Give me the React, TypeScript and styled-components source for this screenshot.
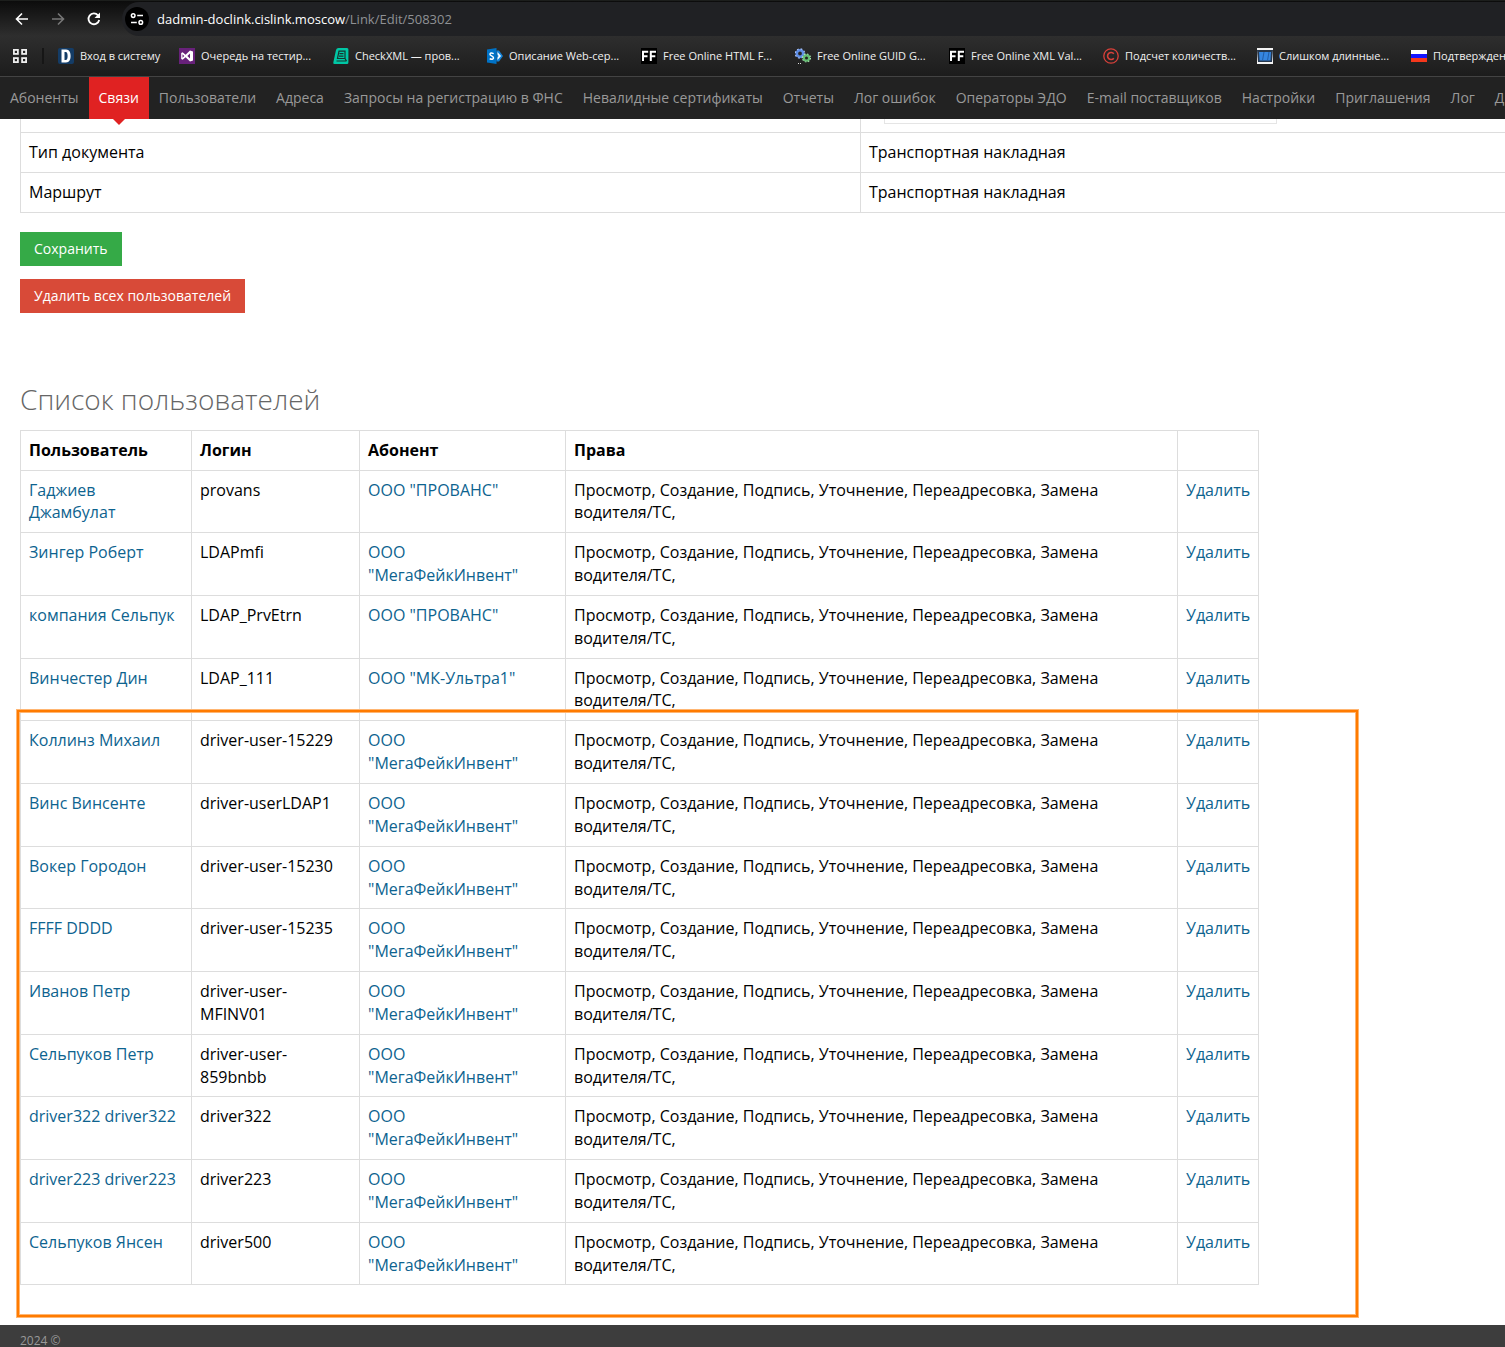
import React from "react";
import styled, { createGlobalStyle } from "styled-components";

const GlobalStyle = createGlobalStyle`
  *, *::before, *::after { box-sizing: border-box; }
  body {
    margin: 0;
    background: #fff;
    color: #000;
    font-family: "Open Sans", "Noto Sans", sans-serif;
    font-size: 16px;
    line-height: 1.4286;
    overflow-x: hidden;
  }
`;

const Page = styled.div`
  overflow: hidden;
`;

const AddressRow = styled.div`
  display: flex;
  align-items: center;
  gap: 20px;
  height: 36px;
  padding: 0 0 0 14px;
  background: linear-gradient(#0c0c0c, #2e2e2e);
  border-top: 1px solid #1c1e1c;
`;

const IconButton = styled.button`
  display: flex;
  flex: none;
  padding: 0;
  border: 0;
  background: none;
`;

const AddressBar = styled.div`
  display: flex;
  flex: 1;
  align-items: center;
  gap: 8px;
  height: 34px;
  padding-left: 3px;
  border-radius: 17px 0 0 17px;
  background: #202124;
  color: #8f9194;
  font-size: 13px;
  line-height: 18px;
`;

const SiteInfo = styled.button`
  display: flex;
  align-items: center;
  justify-content: center;
  width: 24px;
  height: 24px;
  padding: 0;
  border: 0;
  border-radius: 50%;
  background: #000;
`;

const Host = styled.span`
  color: #fff;
`;

const BookmarkBar = styled.nav`
  display: flex;
  align-items: center;
  gap: 20px;
  height: 41px;
  padding: 0 0 1px 12px;
  background: linear-gradient(#2e2e2e, #1c1c1c);
  border-bottom: 1px solid #434343;
`;

const Separator = styled.span`
  flex: none;
  width: 2px;
  height: 16px;
  margin: 0 -6px;
  background: #161616;
`;

const Bookmark = styled.a<{ $short?: boolean }>`
  display: flex;
  flex: none;
  align-items: center;
  gap: 6px;
  width: ${(p) => (p.$short ? 101 : 134)}px;
  color: #f0f0f0;
  font-size: 11px;
  line-height: 18px;
  text-decoration: none;
  white-space: nowrap;

  svg { flex: none; }
`;

const SiteNav = styled.nav`
  display: flex;
  height: 42px;
  background: #222;
`;

const NavLink = styled.a<{ $active?: boolean }>`
  position: relative;
  flex: none;
  padding: 0 10px;
  background: ${(p) => (p.$active ? "#e02222" : "transparent")};
  color: ${(p) => (p.$active ? "#fff" : "#999")};
  font-size: 14px;
  font-weight: ${(p) => (p.$active ? 500 : 400)};
  line-height: 42px;
  text-decoration: none;
  white-space: nowrap;

  &::after {
    content: "";
    display: ${(p) => (p.$active ? "block" : "none")};
    position: absolute;
    top: 100%;
    left: 50%;
    margin-left: -6px;
    border: 6px solid transparent;
    border-bottom: 0;
    border-top-color: #e02222;
  }
`;

const Content = styled.main`
  padding: 0 0 40px 20px;
`;

const Table = styled.table`
  border-collapse: collapse;
  table-layout: fixed;

  th, td {
    padding: 8px;
    border: 1px solid #ddd;
    text-align: left;
    vertical-align: top;
  }
`;

const DetailsTable = styled(Table)`
  width: 113.2%;
`;

const FieldRow = styled.tr`
  && td {
    padding: 0 15px 8px;
    border-top: 0;
  }
`;

const Field = styled.input`
  display: block;
  width: 393px;
  height: 5px;
  margin-left: 8px;
  padding: 0;
  border: 1px solid #e5e5e5;
  border-top: 0;
`;

const Actions = styled.div`
  display: flex;
  flex-direction: column;
  align-items: flex-start;
  gap: 13px;
  padding: 19px 0 66px;
`;

const Button = styled.button<{ $tone: string }>`
  padding: 7px 14px;
  border: 0;
  background: ${(p) => p.$tone};
  color: #fff;
  font-family: inherit;
  font-size: 14px;
  line-height: 20px;
`;

const Heading = styled.h3`
  margin: 0 0 11px;
  color: #666;
  font-size: 28px;
  font-weight: 300;
  line-height: 40px;
`;

const UserList = styled.section`
  position: relative;
`;

const UserTable = styled(Table)`
  width: 100%;
  max-width: 1239px;
`;

const Col = styled.col<{ $width?: number }>`
  width: ${(p) => (p.$width ? p.$width + "px" : "auto")};
`;

const TableLink = styled.a`
  color: #0d638f;
  text-decoration: none;
`;

const Highlight = styled.div`
  position: absolute;
  top: 280px;
  left: -3px;
  width: 1341px;
  height: 607px;
  border: 2px solid #ff7b00;
  box-shadow: 0 0 0 1px #ffb673, inset 0 0 0 1px #ffb673;
  pointer-events: none;
`;

const Footer = styled.footer`
  padding: 8px 20px;
  background: #3d3d3d;
  color: #999;
  font-size: 12px;
  line-height: 15px;
`;

const Svg16 = ({ children }: { children: React.ReactNode }) => (
  <svg width="16" height="16" viewBox="0 0 16 16" aria-hidden="true">
    {children}
  </svg>
);

const ArrowIcon = ({ color, flip }: { color: string; flip?: boolean }) => (
  <Svg16>
    <path
      d={flip ? "M2 8H13.5M8 2.5L13.5 8L8 13.5" : "M14 8H2.5M8 2.5L2.5 8L8 13.5"}
      fill="none"
      stroke={color}
      strokeWidth="1.6"
    />
  </Svg16>
);

const ReloadIcon = () => (
  <Svg16>
    <path d="M13.2 9A5.4 5.4 0 1 1 12 4.3" fill="none" stroke="#fff" strokeWidth="1.8" />
    <path d="M14 1.5V7H8.5Z" fill="#fff" />
  </Svg16>
);

const TuneIcon = () => (
  <svg width="14" height="14" viewBox="0 0 14 14" fill="none" stroke="#fff" strokeWidth="1.5" aria-hidden="true">
    <circle cx="3.2" cy="3.6" r="1.8" />
    <path d="M7.2 3.6H13M1 10.4H6.8" />
    <circle cx="10.8" cy="10.4" r="1.8" />
  </svg>
);

const AppsIcon = () => (
  <Svg16>
    <g fill="none" stroke="#eee" strokeWidth="1.8">
      {[1.9, 10.1].map((x) =>
        [1.9, 10.1].map((y) => <rect key={`${x}-${y}`} x={x} y={y} width="4" height="4" />)
      )}
    </g>
  </Svg16>
);

const DIcon = () => (
  <Svg16>
    <rect width="16" height="16" rx="2" fill="#143c66" />
    <path d="M3.5 1.5H8C11.5 1.5 12.6 4.5 12.6 8S11.500 14.500 8 14.500H3.500Z M6.500 4V12H7.600C9.300 12 9.600 10.300 9.600 8S9.300 4 7.600 4Z" fill="#fff" fillRule="evenodd" />
  </Svg16>
);

const StudioIcon = () => (
  <Svg16>
    <rect width="16" height="16" fill="#68217a" />
    <path d="M2.2 5L3.6 4.2L6.6 6.8L11 2.4L14 3.6V12.4L11 13.6L6.6 9.2L3.6 11.8L2.2 11ZM3.5 6.2V9.8L5.3 8ZM11 5.6L8.3 8L11 10.4Z" fill="#fff" fillRule="evenodd" />
  </Svg16>
);

const CheckXmlIcon = () => (
  <Svg16>
    <path d="M5.500 0H14Q15.500 0 15.400 1.500V14.500Q15.400 16 14 16H1.500Q0 16 .3 14.500L3 2Q3.500 0 5.500 0Z" fill="#00c7a5" />
    <path d="M6 3.2H12V10.500H4.500ZM3.500 13H13.500M6.500 5.700H10.500M6 8.200H10.500M12 10.500L13.500 13" fill="none" stroke="#17352f" strokeWidth="1.200" />
  </Svg16>
);

const SharePointIcon = () => (
  <Svg16>
    <path d="M0 1.500L9.500 0V16L0 14.500Z" fill="#0072c6" />
    <path d="M9.500 2.500H12L16 8L12 13.500H9.500Z" fill="#1683d8" />
    <path d="M6.700 5.600Q3 4.200 3 6.300C3 8 6.500 7.800 6.500 9.900Q6.200 12 2.700 10.700" fill="none" stroke="#fff" strokeWidth="1.500" />
    <path d="M10.500 4L14 8L10.500 12V9.700L11.600 8L10.500 6.300Z" fill="#fff" />
  </Svg16>
);

const FfIcon = () => (
  <Svg16>
    <rect width="16" height="16" fill="#000" />
    <path d="M2 13V3.800H7.200M2 8.200H6.500M9.800 13V3.800H15M9.800 8.200H14.300" fill="none" stroke="#fff" strokeWidth="2" />
  </Svg16>
);

const GearsIcon = () => (
  <Svg16>
    <circle cx="5" cy="5.500" r="3.200" fill="none" stroke="#5f8fe8" strokeWidth="2.600" />
    <circle cx="5" cy="5.500" r="4.700" fill="none" stroke="#a9c5ff" strokeWidth="1.200" strokeDasharray="1.800 1.900" />
    <circle cx="11.500" cy="10" r="2.600" fill="none" stroke="#64bd72" strokeWidth="2.200" />
    <circle cx="11.500" cy="10" r="4" fill="none" stroke="#a5e8ae" strokeWidth="1.100" strokeDasharray="1.600 1.540" />
    <path d="M3 15.500H4M5 15.500H6" stroke="#ddd" />
  </Svg16>
);

const CopyrightIcon = () => (
  <Svg16>
    <circle cx="8" cy="8" r="7.200" fill="none" stroke="#d8403a" strokeWidth="1.300" />
    <path d="M10.800 5.800A3.500 3.500 0 1 0 10.800 10.200" fill="none" stroke="#d8403a" strokeWidth="1.600" />
  </Svg16>
);

const WindowIcon = () => (
  <Svg16>
    <rect width="16" height="16" fill="#f3f3f3" />
    <path d="M0 2H16L15 14H1Z" fill="#27374c" />
    <path d="M2 4H14L13.500 12.500H2.500Z" fill="#3585e0" />
    <path d="M7 4L5.500 12.500M12 4L10.500 12.500" stroke="#205ca8" />
  </Svg16>
);

const FlagIcon = () => (
  <Svg16>
    <path d="M0 2H16V6H0Z" fill="#fff" />
    <path d="M0 6H16V10H0Z" fill="#1414ff" />
    <path d="M0 10H16V14H0Z" fill="#f5381c" />
  </Svg16>
);

const bookmarks = [
  { label: "Вход в систему", icon: <DIcon />, short: true },
  { label: "Очередь на тестир...", icon: <StudioIcon /> },
  { label: "CheckXML — пров...", icon: <CheckXmlIcon /> },
  { label: "Описание Web-сер...", icon: <SharePointIcon /> },
  { label: "Free Online HTML F...", icon: <FfIcon /> },
  { label: "Free Online GUID G...", icon: <GearsIcon /> },
  { label: "Free Online XML Val...", icon: <FfIcon /> },
  { label: "Подсчет количеств...", icon: <CopyrightIcon /> },
  { label: "Слишком длинные...", icon: <WindowIcon /> },
  { label: "Подтвержден", icon: <FlagIcon /> },
];

const sections = [
  "Абоненты", "Связи", "Пользователи", "Адреса", "Запросы на регистрацию в ФНС",
  "Невалидные сертификаты", "Отчеты", "Лог ошибок", "Операторы ЭДО", "E-mail поставщиков",
  "Настройки", "Приглашения", "Лог", "Д",
];

const MFI = 'ООО "МегаФейкИнвент"';
const users = [
  ["Гаджиев Джамбулат", "provans", 'ООО "ПРОВАНС"'],
  ["Зингер Роберт", "LDAPmfi", MFI],
  ["компания Сельпук", "LDAP_PrvEtrn", 'ООО "ПРОВАНС"'],
  ["Винчестер Дин", "LDAP_111", 'ООО "МК-Ультра1"'],
  ["Коллинз Михаил", "driver-user-15229", MFI],
  ["Винс Винсенте", "driver-userLDAP1", MFI],
  ["Вокер Городон", "driver-user-15230", MFI],
  ["FFFF DDDD", "driver-user-15235", MFI],
  ["Иванов Петр", "driver-user-MFINV01", MFI],
  ["Сельпуков Петр", "driver-user-859bnbb", MFI],
  ["driver322 driver322", "driver322", MFI],
  ["driver223 driver223", "driver223", MFI],
  ["Сельпуков Янсен", "driver500", MFI],
];

export default function App() {
  return (
    <Page>
      <GlobalStyle />
      <AddressRow>
        <IconButton aria-label="Назад"><ArrowIcon color="#fff" /></IconButton>
        <IconButton aria-label="Вперед"><ArrowIcon color="#777" flip /></IconButton>
        <IconButton aria-label="Обновить"><ReloadIcon /></IconButton>
        <AddressBar>
          <SiteInfo aria-label="Сведения о сайте"><TuneIcon /></SiteInfo>
          <span><Host>dadmin-doclink.cislink.moscow</Host>/Link/Edit/508302</span>
        </AddressBar>
      </AddressRow>
      <BookmarkBar>
        <IconButton aria-label="Приложения"><AppsIcon /></IconButton>
        <Separator />
        {bookmarks.map((b) => (
          <Bookmark key={b.label} href="#" $short={b.short}>
            {b.icon}
            {b.label}
          </Bookmark>
        ))}
      </BookmarkBar>
      <SiteNav>
        {sections.map((s) => (
          <NavLink key={s} href="#" $active={s === "Связи"}>{s}</NavLink>
        ))}
      </SiteNav>
      <Content>
        <DetailsTable>
          <tbody>
            <FieldRow>
              <td />
              <td><Field aria-label="Значение" /></td>
            </FieldRow>
            <tr><td>Тип документа</td><td>Транспортная накладная</td></tr>
            <tr><td>Маршрут</td><td>Транспортная накладная</td></tr>
          </tbody>
        </DetailsTable>
        <Actions>
          <Button $tone="#35aa47">Сохранить</Button>
          <Button $tone="#d84a38">Удалить всех пользователей</Button>
        </Actions>
        <Heading>Список пользователей</Heading>
        <UserList>
          <UserTable>
            <colgroup>
              <Col $width={171} />
              <Col $width={168} />
              <Col $width={206} />
              <Col />
              <Col $width={81} />
            </colgroup>
            <thead>
              <tr><th>Пользователь</th><th>Логин</th><th>Абонент</th><th>Права</th><th /></tr>
            </thead>
            <tbody>
              {users.map(([name, login, company]) => (
                <tr key={login}>
                  <td><TableLink href="#">{name}</TableLink></td>
                  <td>{login}</td>
                  <td><TableLink href="#">{company}</TableLink></td>
                  <td>Просмотр, Создание, Подпись, Уточнение, Переадресовка, Замена водителя/ТС,</td>
                  <td><TableLink href="#">Удалить</TableLink></td>
                </tr>
              ))}
            </tbody>
          </UserTable>
          <Highlight />
        </UserList>
      </Content>
      <Footer>2024 ©</Footer>
    </Page>
  );
}
